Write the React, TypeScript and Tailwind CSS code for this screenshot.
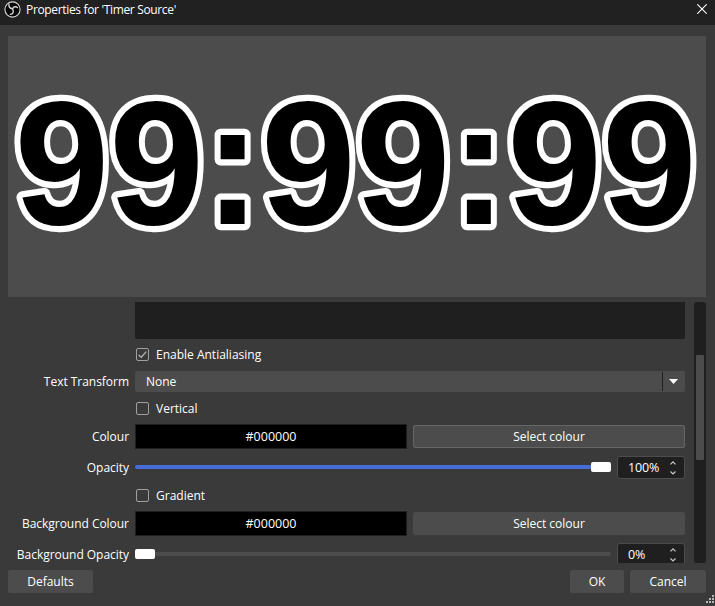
import type { ReactNode } from "react";

function ObsLogo() {
  return (
    <svg width="17" height="17" viewBox="0 0 17 17" className="shrink-0">
      <circle cx="8.500" cy="8.500" r="7.600" fill="#050505" stroke="#d4d4d4" strokeWidth="1.100" />
      <g fill="none" stroke="#cfcfcf" strokeWidth="1.400" strokeLinecap="round">
        <path d="M5 3.200C4.400 5.600 5.800 7.400 8.300 7.800" />
        <path d="M13.400 6.600C11.800 5 9.200 5.600 8.600 8" />
        <path d="M6.400 13.400C9 13 10 10.800 8.800 8.600" />
      </g>
    </svg>
  );
}

function Row({ label, className, children }: { label?: string; className: string; children: ReactNode }) {
  return (
    <div className={`flex shrink-0 items-center gap-1.5 ${className}`}>
      <div className="w-[121px] shrink-0 text-right tracking-[-0.03px] whitespace-nowrap">{label}</div>
      <div className="flex h-full w-[550px] items-center">{children}</div>
    </div>
  );
}

function Check({ label, checked }: { label: string; checked?: boolean }) {
  return (
    <div className="flex items-center gap-[7px] pl-px">
      <div className="flex size-[13px] items-center justify-center rounded-[2px] border border-[#a0a0a0]">
        {checked && (
          <svg width="11" height="11" viewBox="0 0 11 11" className="shrink-0">
            <path d="M1.700 6L4.200 8.300L9.300 2.600" fill="none" stroke="#b4b4b4" strokeWidth="1.300" />
          </svg>
        )}
      </div>
      <span>{label}</span>
    </div>
  );
}

function ColourField({ focused }: { focused?: boolean }) {
  return (
    <div className="flex h-full w-full items-center gap-1.5">
      <div className="flex h-[25px] w-[272px] items-center justify-center border border-[#1f1f1f] bg-black text-[12.5px]">#000000</div>
      <div
        className={`flex h-[23px] w-[272px] items-center justify-center rounded-[2px] border bg-[#4c4c4c] ${
          focused ? "border-[#666666]" : "border-[#4c4c4c]"
        }`}
      >
        Select colour
      </div>
    </div>
  );
}

function Spin({ value }: { value: string }) {
  return (
    <div className="flex h-[23px] w-[68px] items-center justify-between rounded-[3px] border border-[#4c4c4c] bg-[#1f1f1f] pr-[7px] pl-2.5">
      <span className="text-[12.5px] tracking-[-0.15px]">{value}</span>
      <svg width="8" height="17" viewBox="0 0 8 17" fill="none" stroke="#c8c8c8" strokeWidth="1.200">
        <path d="M1.500 5.300L4 2.800L6.500 5.300M1.500 12.500L4 15L6.500 12.500" />
      </svg>
    </div>
  );
}

function OpacityField({ full, value }: { full?: boolean; value: string }) {
  return (
    <div className="flex h-full w-full items-center justify-between">
      <div className="mb-px flex h-[10px] w-[476px] items-center">
        {full && <div className="h-1 w-[456px] rounded-l-full bg-[#476bd7]" />}
        <div className="h-[10px] w-5 rounded-[2px] bg-white" />
        {!full && <div className="h-1 w-[456px] rounded-r-full bg-[#4c4c4c]" />}
      </div>
      <Spin value={value} />
    </div>
  );
}

function Button({ label, className }: { label: string; className: string }) {
  return <div className={`flex h-[23px] items-center justify-center rounded-[2px] bg-[#4c4c4c] ${className}`}>{label}</div>;
}

export default function App() {
  return (
    <div className="flex h-[606px] w-[715px] flex-col overflow-hidden bg-[#3a3a3a] font-['Open_Sans','Noto_Sans',sans-serif] text-[12px] leading-[13px] text-white">
      <div className="flex h-[25px] shrink-0 items-center justify-between bg-[#212121] pr-2 pl-1">
        <div className="flex items-center gap-[5px] pb-[7px]">
          <ObsLogo />
          <span className="tracking-[-0.34px]">Properties for 'Timer Source'</span>
        </div>
        <svg width="10" height="10" viewBox="0 0 10 10" className="mb-[7px]">
          <path d="M0.300 0.300L9.700 9.700M9.700 0.300L0.300 9.700" stroke="#fff" strokeWidth="1.100" />
        </svg>
      </div>

      <div className="mt-[11px] ml-2 h-[261px] w-[698px] shrink-0 bg-[#4c4c4c]">
        <svg width="698" height="261" viewBox="0 0 698 261">
          <text
            transform="translate(6.600 187.900) scale(0.9965 1.033)"
            fill="#000"
            stroke="#fff"
            strokeWidth="12"
            strokeLinejoin="round"
            paintOrder="stroke"
            className="font-['Liberation_Sans',Arial,sans-serif] text-[171px] font-bold"
          >
            99:99:99
          </text>
        </svg>
      </div>

      <div className="mt-[5px] ml-2 flex h-[261px] w-[698px] shrink-0 justify-between overflow-hidden">
        <div className="flex flex-col">
          <Row className="h-[37px]">
            <div className="h-full w-full rounded-b-[2px] bg-[#1f1f1f]" />
          </Row>
          <Row className="mt-[9px] h-[13px]">
            <Check label="Enable Antialiasing" checked />
          </Row>
          <Row label="Text Transform" className="mt-[10px] h-[21px]">
            <div className="flex h-[21px] w-full items-center rounded-[2px] bg-[#4c4c4c]">
              <span className="flex-1 pl-[11px]">None</span>
              <div className="flex h-[19px] w-[23px] items-center justify-center border-l border-[#1f1f1f] pr-px">
                <svg width="9" height="5" viewBox="0 0 9 5">
                  <path d="M0 0H9L4.500 5Z" fill="#fff" />
                </svg>
              </div>
            </div>
          </Row>
          <Row className="mt-[10px] h-[13px]">
            <Check label="Vertical" />
          </Row>
          <Row label="Colour" className="mt-[9px] h-[25px]">
            <ColourField focused />
          </Row>
          <Row label="Opacity" className="mt-[7px] h-[23px]">
            <OpacityField full value="100%" />
          </Row>
          <Row className="mt-[10px] h-[13px]">
            <Check label="Gradient" />
          </Row>
          <Row label="Background Colour" className="mt-[9px] h-[25px]">
            <ColourField />
          </Row>
          <Row label="Background Opacity" className="mt-[7px] h-[23px]">
            <OpacityField value="0%" />
          </Row>
        </div>
        <div className="h-full w-3 rounded-[3px] bg-[#1f1f1f] px-0.5 pt-[53px]">
          <div className="h-[105px] w-2 rounded-[1px] bg-[#4c4c4c]" />
        </div>
      </div>

      <div className="mt-[7px] ml-2 flex w-[698px] shrink-0 gap-1.5">
        <Button label="Defaults" className="mr-auto w-[85px]" />
        <Button label="OK" className="w-[54px]" />
        <Button label="Cancel" className="w-[76px]" />
      </div>
      <svg width="8" height="8" viewBox="0 0 8 8" className="mt-[2px] ml-[706px] shrink-0" fill="#b8b8b8">
        <path d="M6 0h2v2h-2zM3 3h2v2h-2zM6 3h2v2h-2zM0 6h2v2h-2zM3 6h2v2h-2zM6 6h2v2h-2z" />
      </svg>
    </div>
  );
}
